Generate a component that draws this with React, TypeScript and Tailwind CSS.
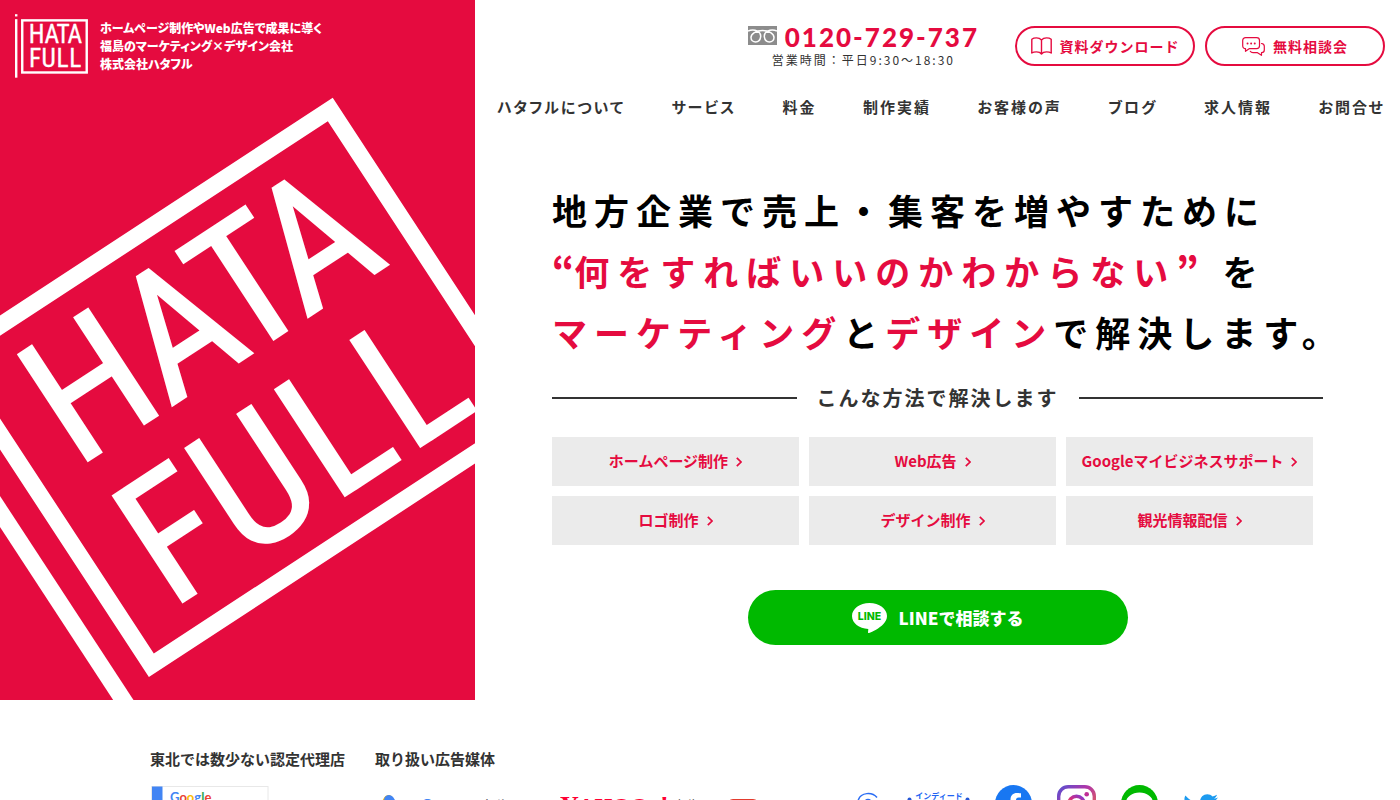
import type { ReactNode } from "react";

const NAV = [
  "ハタフルについて",
  "サービス",
  "料金",
  "制作実績",
  "お客様の声",
  "ブログ",
  "求人情報",
  "お問合せ",
];

const SERVICES = [
  "ホームページ制作",
  "Web広告",
  "Googleマイビジネスサポート",
  "ロゴ制作",
  "デザイン制作",
  "観光情報配信",
];

// Flag-shaped mark, drawn in a 514 x 448 box
function FlagMark() {
  return (
    <g>
      <rect x="0" y="0" width="17" height="16" fill="#fff" />
      <rect x="0" y="35" width="17" height="412" fill="#fff" />
      <rect x="51" y="43.5" width="454" height="367" fill="none" stroke="#fff" strokeWidth="17" />
      <g
        fill="#fff"
        stroke="#fff"
        strokeWidth="2"
        fontFamily="'Liberation Sans Narrow', 'Roboto Condensed', sans-serif"
        fontSize="179"
      >
        <text x="96 207 293 369" y="205">
          HATA
        </text>
        <text x="98 187 292 382" y="375">
          FULL
        </text>
      </g>
    </g>
  );
}

function FreeDialIcon() {
  return (
    <svg viewBox="0 0 29 19" className="w-[29px] h-[19px]" aria-hidden="true">
      <rect width="29" height="19" fill="#8c8c8c" />
      <path
        d="M0 5C3 3.600 7 3.800 9.500 5.200C12 6.600 13 8.800 12.600 11.200C12.200 14 10.200 16 7.600 16C5 16 3 14.200 3 11.600C3 7.500 8 4.600 14.500 4.600C21 4.600 26 7.500 26 11.600C26 14.200 24 16 21.400 16C18.800 16 16.800 14 16.400 11.200C16 8.800 17 6.600 19.500 5.200C22 3.800 26 3.600 29 5"
        fill="none"
        stroke="#fff"
        strokeWidth="1.500"
      />
    </svg>
  );
}

function BookIcon() {
  return (
    <svg viewBox="0 0 21 18" className="w-[21px] h-[18px]" fill="none" stroke="currentColor" strokeWidth="1.4" strokeLinejoin="round" aria-hidden="true">
      <path d="M10.500 3C9 1.300 7.500 .9 5.500 .9C3.500 .9 2 1.300 .8 2.200V16C2 15.200 3.500 14.900 5.500 14.900C7.500 14.900 9.300 15.300 10.500 17C11.700 15.300 13.500 14.900 15.500 14.900C17.500 14.900 19 15.200 20.200 16V2.200C19 1.300 17.500 .9 15.500 .9C13.500 .9 12 1.300 10.500 3ZM10.500 3V17" />
    </svg>
  );
}

function ChatIcon() {
  return (
    <svg viewBox="0 0 23 19" className="w-[23px] h-[19px]" fill="none" stroke="currentColor" strokeWidth="1.200" strokeLinecap="round" strokeLinejoin="round" aria-hidden="true">
      <path d="M3.600 .7H14.600C16.400 .7 17.500 1.800 17.500 3.500V8.800C17.500 10.500 16.400 11.600 14.600 11.600H7.500L3.500 14.300V11.600C1.800 11.600 .7 10.500 .7 8.800V3.500C.7 1.800 1.800 .7 3.600 .7Z" />
      <path d="M19.500 6.500C21.300 6.700 22.300 7.700 22.300 9.300V13C22.300 14.700 21.300 15.700 19.500 15.700V18.300L15.500 15.700H11C9.700 15.700 8.800 15.200 8.300 14.300" />
      <path d="M5.500 6.500H5.600M9.100 6.500H9.200M12.700 6.500H12.800" strokeWidth="1.900" />
    </svg>
  );
}

function ArrowIcon() {
  return (
    <svg viewBox="0 0 6 10" className="w-[6px] h-[10px]" fill="none" stroke="currentColor" strokeWidth="1.700" aria-hidden="true">
      <path d="M.8 .8L5 5L.8 9.200" />
    </svg>
  );
}

function LineBubble() {
  return (
    <svg viewBox="0 0 35 30" className="w-[35px] h-[30px]" aria-hidden="true">
      <path
        d="M17.500 0C27.200 0 35 5.800 35 13C35 16 33.700 18.700 31.200 21.200C27.600 25 20.500 29 17 30C15.800 30.300 16 29.300 16.100 28.500L16.300 26C7 25.500 0 20 0 13C0 5.800 7.800 0 17.500 0Z"
        fill="#fff"
      />
      <text x="17.500" y="17" textAnchor="middle" fontFamily="Inter, sans-serif" fontWeight="800" fontSize="10.500" fill="#00b900">
        LINE
      </text>
    </svg>
  );
}

function PillLink({ icon, children }: { icon: ReactNode; children: ReactNode }) {
  return (
    <a
      href="#"
      className="w-[180px] h-10 flex items-center justify-center gap-2 rounded-full border-2 border-[#e50b3f] text-[#e50b3f] text-sm font-bold tracking-[1px] whitespace-nowrap"
    >
      {icon}
      {children}
    </a>
  );
}

function MediaLogos() {
  return (
    <ul className="flex gap-[25px]">
      <li>
        <svg viewBox="0 0 160 40" className="w-[160px] h-10" role="img" aria-label="Google 広告">
          <path d="M13.500 15L4 31" stroke="#fbbc04" strokeWidth="10" strokeLinecap="round" />
          <path d="M14 15L24 31" stroke="#4285f4" strokeWidth="10" strokeLinecap="round" />
          <circle cx="4.500" cy="31" r="5" fill="#34a853" />
          <text x="45" y="28" fontFamily="'Noto Sans CJK JP', sans-serif" fontSize="19" fill="#4285f4">
            G
            <tspan fontSize="16" fill="#5f6368">
              oogle 広告
            </tspan>
          </text>
        </svg>
      </li>
      <li>
        <svg viewBox="0 0 140 40" className="w-[140px] h-10" role="img" aria-label="Yahoo!広告">
          <g fontFamily="'Liberation Serif', serif" fontWeight="700" fill="#ff0033">
            <text x="0" y="29" fontSize="26">
              Y
            </text>
            <text x="18" y="29" fontSize="23">
              AHOO
            </text>
            <text x="100" y="29" fontSize="26">
              !
            </text>
          </g>
          <text x="112" y="26" fontFamily="'Noto Sans CJK JP', sans-serif" fontSize="14" fill="#666">
            広告
          </text>
        </svg>
      </li>
      <li>
        <svg viewBox="0 0 95 40" className="w-[95px] h-10" role="img" aria-label="SmartNews">
          <rect x="2" y="14" width="32" height="20" rx="6" fill="#e33b2e" />
          <text x="38" y="28" fontFamily="Roboto, sans-serif" fontSize="11" fill="#444">
            SmartNews
          </text>
        </svg>
      </li>
      <li>
        <svg viewBox="0 0 36 40" className="w-9 h-10" fill="none" stroke="#2a6df4" aria-hidden="true">
          <path d="M13.500 14.500C16 7.500 27 6.500 32 12.500M13.500 14.500C10.500 23 16 31 25 31" strokeWidth="1.500" />
          <circle cx="23" cy="18" r="3.500" strokeWidth="1.500" />
        </svg>
      </li>
      <li>
        <svg viewBox="0 0 64 40" className="w-16 h-10" role="img" aria-label="Indeed">
          <circle cx="3.500" cy="14.500" r="2" fill="#2557d6" />
          <circle cx="61.500" cy="14.500" r="2" fill="#2557d6" />
          <text x="33" y="14" textAnchor="middle" fontFamily="'Noto Sans CJK JP', sans-serif" fontWeight="700" fontSize="8" fill="#2164f3">
            インディード
          </text>
          <text x="33" y="34" textAnchor="middle" fontFamily="Inter, sans-serif" fontWeight="700" fontSize="18" fill="#2557d6">
            indeed
          </text>
        </svg>
      </li>
      <li>
        <svg viewBox="0 0 37 40" className="w-[37px] h-10" role="img" aria-label="Facebook">
          <circle cx="18.500" cy="18.500" r="18.500" fill="#1877f2" />
          <path d="M15.500 37V24H11V18.500H15.500V14.700C15.500 10.200 18 7.900 22 7.900C24 7.900 26 8.200 26 8.200V12.500H23.800C21.600 12.500 21 13.900 21 15.200V18.500H26L25.200 24H21V37Z" fill="#fff" />
        </svg>
      </li>
      <li>
        <svg viewBox="0 0 39 40" className="w-[39px] h-10" role="img" aria-label="Instagram">
          <defs>
            <linearGradient id="ig" x1="0.800" y1="0" x2="0.200" y2="1">
              <stop offset="0" stopColor="#8a3ac8" />
              <stop offset="0.400" stopColor="#d62e7c" />
              <stop offset="1" stopColor="#fdc04b" />
            </linearGradient>
            <linearGradient id="ig-edge" x1="0" y1="0" x2="1" y2="1">
              <stop offset="0" stopColor="#5a50d0" />
              <stop offset="0.400" stopColor="#b035a8" />
              <stop offset="1" stopColor="#f77737" />
            </linearGradient>
          </defs>
          <rect x="1.700" y="1.700" width="35.600" height="35.600" rx="9.500" fill="none" stroke="url(#ig-edge)" strokeWidth="3.400" />
          <circle cx="19.500" cy="19.500" r="8.200" fill="none" stroke="url(#ig)" strokeWidth="3.400" />
          <circle cx="29.700" cy="9.300" r="2.300" fill="#c02f96" />
        </svg>
      </li>
      <li>
        <svg viewBox="0 0 37 40" className="w-[37px] h-10" role="img" aria-label="LINE">
          <circle cx="18.500" cy="18.500" r="18.500" fill="#00b900" />
          <path d="M18.500 7.500C25.700 7.500 32 12 32 17.500C32 23 22 29.500 18.500 31C18.300 29.500 19 27.500 17.500 27.300C11 26.600 5 22.800 5 17.500C5 12 11.300 7.500 18.500 7.500Z" fill="#fff" />
        </svg>
      </li>
      <li>
        <svg viewBox="0 0 35 40" className="w-[35px] h-10" role="img" aria-label="Twitter">
          <path
            d="M35 12.600C33.700 13.200 32.300 13.600 30.900 13.700C32.400 12.900 33.500 11.500 34 9.800C32.600 10.600 31.100 11.200 29.500 11.500C28.200 10.100 26.300 9.200 24.300 9.200C20.300 9.200 17.100 12.400 17.100 16.400C17.100 17 17.200 17.500 17.300 18C11.300 17.700 6 14.900 2.400 10.500C1.800 11.600 1.400 12.800 1.400 14.100C1.400 16.600 2.700 18.800 4.600 20.100C3.400 20.100 2.300 19.700 1.400 19.200C1.400 22.800 3.900 25.700 7.200 26.400C6 26.700 5 26.700 3.900 26.500C4.900 29.400 7.500 31.400 10.700 31.500C7.600 33.900 3.900 34.900 0 34.500C3.200 36.500 7 37.700 11 37.700C24.300 37.700 31.800 26.500 31.400 16.300C32.800 15.300 34.100 14 35 12.600Z"
            fill="#1d9bf0"
          />
        </svg>
      </li>
    </ul>
  );
}

function GoogleBadge() {
  return (
    <svg viewBox="0 0 120 110" className="w-[120px] h-[110px]" role="img" aria-label="Google Partner">
      <rect x="1.500" y="1.500" width="116.500" height="107" fill="#fff" stroke="#e8e8e8" strokeWidth="1" />
      <rect x="2" y="1.500" width="10.500" height="107" fill="#4285f4" />
      <text x="20" y="17" fontFamily="Lato, sans-serif" fontWeight="700" fontSize="13">
        <tspan fill="#4285f4">G</tspan>
        <tspan fill="#ea4335">o</tspan>
        <tspan fill="#fbbc05">o</tspan>
        <tspan fill="#4285f4">g</tspan>
        <tspan fill="#34a853">l</tspan>
        <tspan fill="#ea4335">e</tspan>
      </text>
      <text x="20" y="36" fontFamily="Lato, sans-serif" fontSize="16" fill="#5f6368">
        Partner
      </text>
    </svg>
  );
}

export default function App() {
  return (
    <div lang="ja" className="min-w-[1280px] bg-white text-[#333] font-['Noto_Sans_CJK_JP',sans-serif]">
      <div className="flex min-h-[700px]">
        <aside className="relative flex-[19] min-w-0 overflow-hidden bg-[#e50b3f]">
          <svg
            viewBox="0 0 475 700"
            preserveAspectRatio="xMidYMid slice"
            className="absolute inset-0 w-full h-full"
            aria-hidden="true"
          >
            <g transform="rotate(-33.200) translate(-288.600 229)">
              <FlagMark />
            </g>
          </svg>
          <a href="#" className="relative flex items-start gap-3 pl-[15px] pt-[14px] text-white">
            <svg viewBox="0 0 514 448" className="w-[73px] h-16" role="img" aria-label="HATAFULL">
              <FlagMark />
            </svg>
            <p className="pt-[5px] text-xs leading-[18px] font-black whitespace-nowrap [font-feature-settings:'palt']">
              ホームページ制作やWeb広告で成果に導く
              <br />
              福島のマーケティング×デザイン会社
              <br />
              株式会社ハタフル
            </p>
          </a>
        </aside>

        <div className="flex-[37] min-w-0">
          <header className="pt-[26px] pl-[22px] pr-[15px]">
            <div className="flex justify-end items-start gap-9">
              <div className="flex flex-col items-center">
                <a
                  href="tel:0120-729-737"
                  className="flex items-start gap-2 text-[#e50b3f] font-['Lato',sans-serif] font-black text-[26px] leading-[22px] tracking-[2px]"
                >
                  <FreeDialIcon />
                  0120-729-737
                </a>
                <p className="mt-[2px] text-xs leading-5 tracking-[2px]">営業時間：平日9:30〜18:30</p>
              </div>
              <div className="flex gap-[10px]">
                <PillLink icon={<BookIcon />}>資料ダウンロード</PillLink>
                <PillLink icon={<ChatIcon />}>無料相談会</PillLink>
              </div>
            </div>
            <nav className="mt-[25px]">
              <ul className="flex justify-between text-[15px] leading-6 font-bold tracking-[2px] whitespace-nowrap [font-feature-settings:'palt']">
                {NAV.map((item) => (
                  <li key={item}>
                    <a href="#">{item}</a>
                  </li>
                ))}
              </ul>
            </nav>
          </header>

          <main className="px-[77px] pt-[60px]">
            <h1 className="text-black text-[35px] leading-[61px] font-bold tracking-[7px] whitespace-nowrap">
              地方企業で売上・集客を増やすために
              <br />
              <span className="tracking-[8px]">
                <span className="text-[#e50b3f]">
                  <span className="tracking-normal font-black [font-feature-settings:'palt']">“</span>
                  何をすればいいのかわからない
                  <span className="mr-2 tracking-normal font-black [font-feature-settings:'palt']">”</span>
                </span>{" "}
                を
              </span>
              <br />
              <span className="text-[#e50b3f]">マーケティング</span>と
              <span className="text-[#e50b3f]">デザイン</span>で解決します。
            </h1>

            <h2 className="mt-[21px] flex items-center gap-5 text-xl leading-[30px] font-bold tracking-[2px] whitespace-nowrap before:flex-1 before:h-[2px] before:bg-[#333] after:flex-1 after:h-[2px] after:bg-[#333]">
              こんな方法で解決します
            </h2>

            <ul className="mt-6 pr-[10px] grid grid-cols-3 gap-[10px]">
              {SERVICES.map((service) => (
                <li key={service}>
                  <a
                    href="#"
                    className="h-[49px] flex items-center justify-center gap-2 bg-[#ebebeb] text-[#e50b3f] text-[15px] font-bold whitespace-nowrap"
                  >
                    {service}
                    <ArrowIcon />
                  </a>
                </li>
              ))}
            </ul>

            <a
              href="#"
              className="mt-[45px] mx-auto w-[380px] h-[55px] flex items-center justify-center gap-3 rounded-full bg-[#00b900] text-white text-[17px] font-black"
            >
              <LineBubble />
              LINEで相談する
            </a>
          </main>
        </div>
      </div>

      <section className="max-w-[1100px] mx-auto pt-[45px] pb-10 flex gap-[30px] text-[15px] leading-7">
        <div>
          <h3 className="mb-3 font-bold">東北では数少ない認定代理店</h3>
          <GoogleBadge />
        </div>
        <div>
          <h3 className="mb-3 font-bold">取り扱い広告媒体</h3>
          <MediaLogos />
        </div>
      </section>
    </div>
  );
}
